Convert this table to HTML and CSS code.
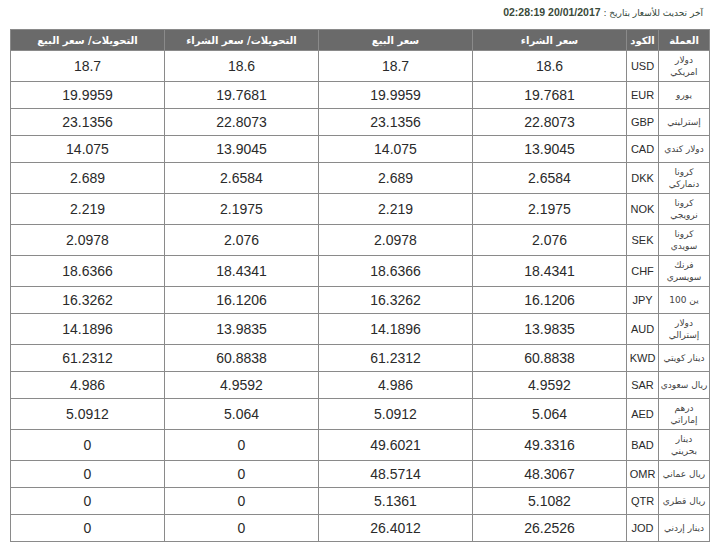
FILE: index.html
```html
<!DOCTYPE html>
<html lang="ar">
<head>
<meta charset="utf-8">
<title>أسعار العملات</title>
<link rel="stylesheet" href="styles.css">
</head>
<body>
<div class="page">
  <div class="updated" dir="rtl"><span class="label">آخر تحديث للأسعار بتاريخ :</span> <b class="stamp" dir="ltr">02:28:19 20/01/2017</b></div>
  <table class="rates" dir="rtl">
    <colgroup>
      <col class="c-name"><col class="c-code"><col class="c-num"><col class="c-num"><col class="c-num"><col class="c-num">
    </colgroup>
    <thead>
      <tr><th>العملة</th><th>الكود</th><th>سعر الشراء</th><th>سعر البيع</th><th>التحويلات/ سعر الشراء</th><th>التحويلات/ سعر البيع</th></tr>
    </thead>
    <tbody>
      <tr class="r2"><td class="name">دولار<br>امريكي</td><td class="code">USD</td><td>18.6</td><td>18.7</td><td>18.6</td><td>18.7</td></tr>
      <tr class="r1"><td class="name">يورو</td><td class="code">EUR</td><td>19.7681</td><td>19.9959</td><td>19.7681</td><td>19.9959</td></tr>
      <tr class="r1"><td class="name">إسترليني</td><td class="code">GBP</td><td>22.8073</td><td>23.1356</td><td>22.8073</td><td>23.1356</td></tr>
      <tr class="r1"><td class="name">دولار كندي</td><td class="code">CAD</td><td>13.9045</td><td>14.075</td><td>13.9045</td><td>14.075</td></tr>
      <tr class="r2"><td class="name">كرونا<br>دنماركي</td><td class="code">DKK</td><td>2.6584</td><td>2.689</td><td>2.6584</td><td>2.689</td></tr>
      <tr class="r2"><td class="name">كرونا<br>نرويجي</td><td class="code">NOK</td><td>2.1975</td><td>2.219</td><td>2.1975</td><td>2.219</td></tr>
      <tr class="r2"><td class="name">كرونا<br>سويدي</td><td class="code">SEK</td><td>2.076</td><td>2.0978</td><td>2.076</td><td>2.0978</td></tr>
      <tr class="r2"><td class="name">فرنك<br>سويسري</td><td class="code">CHF</td><td>18.4341</td><td>18.6366</td><td>18.4341</td><td>18.6366</td></tr>
      <tr class="r1"><td class="name">ين 100</td><td class="code">JPY</td><td>16.1206</td><td>16.3262</td><td>16.1206</td><td>16.3262</td></tr>
      <tr class="r2"><td class="name">دولار<br>إسترالي</td><td class="code">AUD</td><td>13.9835</td><td>14.1896</td><td>13.9835</td><td>14.1896</td></tr>
      <tr class="r1"><td class="name">دينار كويتي</td><td class="code">KWD</td><td>60.8838</td><td>61.2312</td><td>60.8838</td><td>61.2312</td></tr>
      <tr class="r1"><td class="name">ريال سعودي</td><td class="code">SAR</td><td>4.9592</td><td>4.986</td><td>4.9592</td><td>4.986</td></tr>
      <tr class="r2"><td class="name">درهم<br>إماراتي</td><td class="code">AED</td><td>5.064</td><td>5.0912</td><td>5.064</td><td>5.0912</td></tr>
      <tr class="r2"><td class="name">دينار<br>بحريني</td><td class="code">BAD</td><td>49.3316</td><td>49.6021</td><td>0</td><td>0</td></tr>
      <tr class="r1"><td class="name">ريال عماني</td><td class="code">OMR</td><td>48.3067</td><td>48.5714</td><td>0</td><td>0</td></tr>
      <tr class="r1"><td class="name">ريال قطري</td><td class="code">QTR</td><td>5.1082</td><td>5.1361</td><td>0</td><td>0</td></tr>
      <tr class="r1"><td class="name">دينار إردني</td><td class="code">JOD</td><td>26.2526</td><td>26.4012</td><td>0</td><td>0</td></tr>
    </tbody>
  </table>
</div>
</body>
</html>
```
FILE: styles.css
```css
html, body {
  margin: 0;
  padding: 0;
  background: #ffffff;
}
.page {
  padding: 5px 11px 0 10px;
  font-family: "Liberation Sans", Arial, sans-serif;
}
.updated {
  height: 14px;
  line-height: 14px;
  padding-right: 5px;
  margin-bottom: 10px;
  font-size: 10px;
  color: #33473a;
  text-align: right;
  white-space: nowrap;
}
.updated .label {
  font-family: "DejaVu Sans", sans-serif;
  font-size: 9px;
}
.updated .stamp {
  font-family: "Liberation Sans", Arial, sans-serif;
  font-weight: bold;
  font-size: 10.5px;
  color: #3a4a3a;
}
.rates {
  border-collapse: collapse;
  table-layout: fixed;
  width: 699px;
  color: #2a2a2a;
}
.c-name { width: 51px; }
.c-code { width: 32px; }
.c-num { width: 154px; }
.rates th {
  background: #6a6a6a;
  color: #ffffff;
  font-family: "DejaVu Sans", sans-serif;
  font-size: 10px;
  font-weight: bold;
  height: 20px;
  padding: 0;
  border: 1px solid #8a8a8a;
  text-align: center;
  white-space: nowrap;
}
.rates td {
  border: 1px solid #8a8a8a;
  padding: 0;
  text-align: center;
  vertical-align: middle;
  font-size: 14px;
  white-space: nowrap;
}
.rates .r1 td { height: 26px; }
.rates .r2 td { height: 30px; }
.rates td.code {
  font-size: 11px;
  color: #2a2a2a;
}
.rates td.name {
  font-family: "DejaVu Sans", sans-serif;
  font-size: 9px;
  line-height: 12px;
  color: #444444;
}
```
